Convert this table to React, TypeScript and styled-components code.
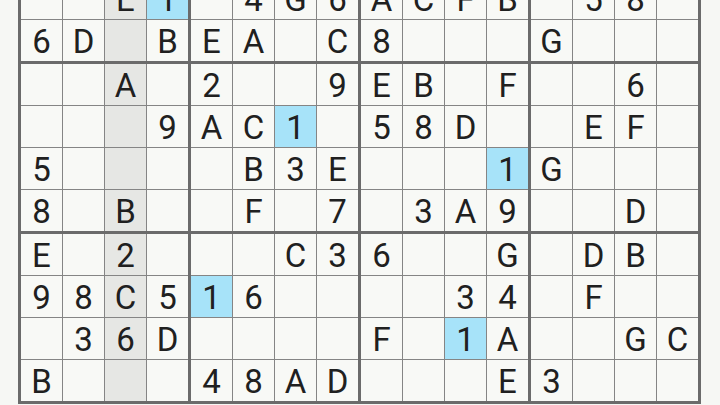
import React from "react";
import styled, { createGlobalStyle } from "styled-components";

const GlobalStyle = createGlobalStyle`
  html, body {
    margin: 0;
    padding: 0;
    background: #f6f7f4;
  }
  #root {
    width: 720px;
    height: 405px;
    overflow: hidden;
  }
`;

const Page = styled.div`
  width: 720px;
  height: 405px;
  overflow: hidden;
  padding-left: 18px;
  box-sizing: border-box;
  background: #f6f7f4;
`;

const Board = styled.div`
  margin-top: -279px;
  display: grid;
  grid-template-columns: repeat(4, auto);
  gap: 3px;
  padding: 3px;
  width: max-content;
  background: #6b6b6b;
`;

const Block = styled.div`
  display: grid;
  grid-template-columns: repeat(4, 41px);
  grid-auto-rows: 41px;
  gap: 1px;
  background: #858585;
`;

const Cell = styled.div<{ $tone: "plain" | "column" | "match" }>`
  display: flex;
  align-items: center;
  justify-content: center;
  background: ${(p) =>
    p.$tone === "match" ? "#a7e3f9" : p.$tone === "column" ? "#e6e7e4" : "#f8f9f6"};
  color: #202020;
  font-family: Roboto, "Noto Sans", sans-serif;
  font-size: 33px;
  line-height: 1;
  padding-top: 1px;
  box-sizing: border-box;
`;

const rows: string[] = [
  "................",
  "................",
  "................",
  "................",
  "................",
  "................",
  "..E1.4G6ACFB.58.",
  "6D.BEA.C8...G...",
  "..A.2..9EB.F..6.",
  "...9AC1.58D..EF.",
  "5....B3E...1G...",
  "8.B..F.7.3A9..D.",
  "E.2...C36..G.DB.",
  "98C516....34.F..",
  ".36D....F.1A..GC",
  "B...48AD...E3...",
];

const SELECTED_COL = 2;
const SELECTED_VALUE = "1";

export default function App() {
  const blocks = [];
  for (let br = 0; br < 4; br++) {
    for (let bc = 0; bc < 4; bc++) {
      const cells = [];
      for (let r = br * 4; r < br * 4 + 4; r++) {
        for (let c = bc * 4; c < bc * 4 + 4; c++) {
          const ch = rows[r][c];
          const v = ch === "." ? "" : ch;
          const tone =
            v === SELECTED_VALUE ? "match" : c === SELECTED_COL ? "column" : "plain";
          cells.push(
            <Cell key={`${r}-${c}`} $tone={tone}>
              {v}
            </Cell>
          );
        }
      }
      blocks.push(<Block key={`${br}-${bc}`}>{cells}</Block>);
    }
  }
  return (
    <>
      <GlobalStyle />
      <Page>
        <Board>{blocks}</Board>
      </Page>
    </>
  );
}
